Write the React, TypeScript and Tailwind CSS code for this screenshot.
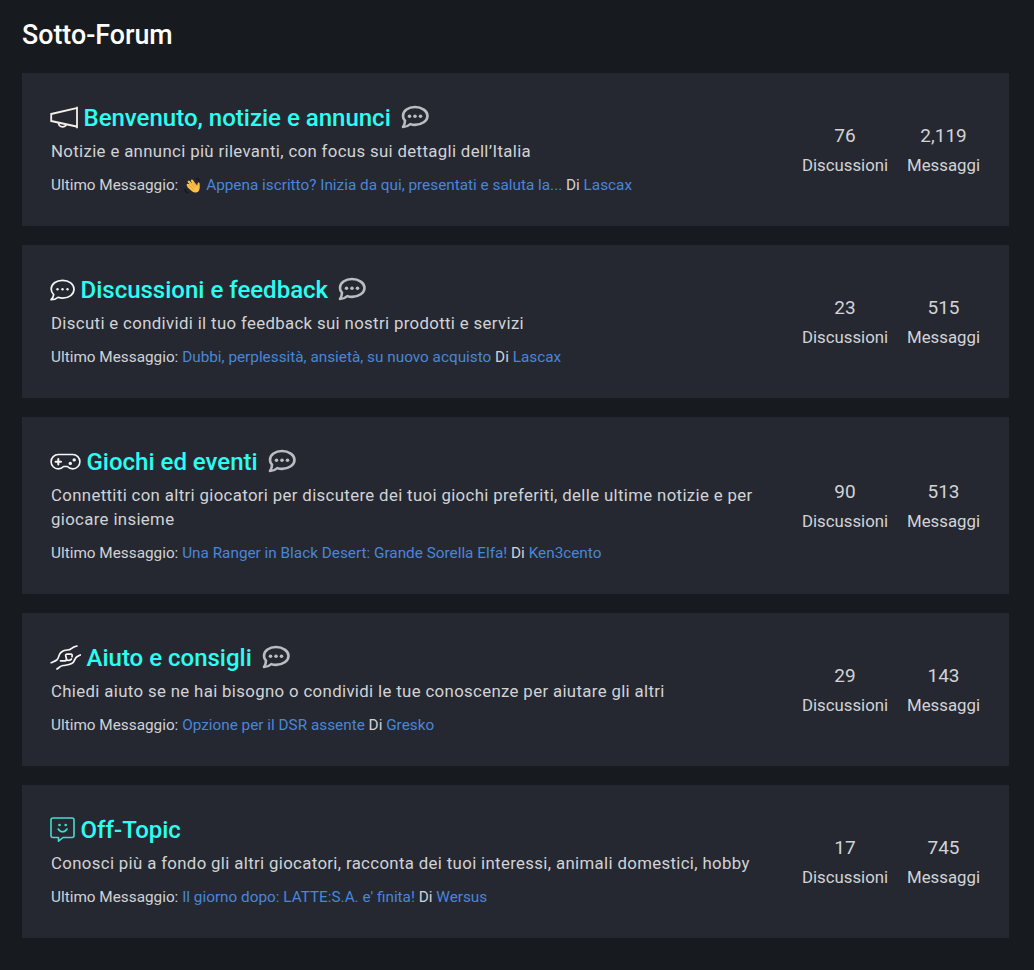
import type { ReactNode } from "react";

type Forum = {
  title: string;
  description: string;
  icon: ReactNode;
  bubble?: boolean;
  wave?: boolean;
  lastPost: string;
  author: string;
  topics: string;
  messages: string;
  heightClass: string;
}

function MegaphoneIcon() {
  return (
    <svg className="mr-[6px] -ml-px mb-[2px] h-[24px] w-[28px] shrink-0" viewBox="0 0 28 24" fill="none" stroke="#f4f0e6" strokeWidth="1.8">
      <path d="M1.200 8v9M1.200 9 26.500 3.200M1.200 16l25.300 5.500M27 1.800v21.400" />
      <path d="M8.500 17.800c.2 2.400 1.800 4 4 4 1.900 0 3.400-1 4-2.800" />
    </svg>
  )
}

function ChatIcon() {
  return (
    <svg className="mr-[6px] -ml-px h-[24px] w-[25px] shrink-0" viewBox="0 0 25 24" fill="none" stroke="#f6f6f6" strokeWidth="1.7" strokeLinejoin="round">
      <path d="M3.700 16.700C2.100 15 1.200 13.200 1.200 11.100 1.200 5.900 6.200 2.300 12.600 2.300s11.400 3.700 11.400 8.900-5 8.900-11.400 8.900c-1.700 0-3.200-.3-4.600-.8-1.800 1.500-4.200 2.400-6.900 2.400 1.500-1.500 2.400-3.200 2.600-5Z" />
      <g fill="#f6f6f6" stroke="none">
        <circle cx="7.500" cy="11.200" r="1.200" />
        <circle cx="12.500" cy="11.200" r="1.200" />
        <circle cx="17.500" cy="11.200" r="1.200" />
      </g>
    </svg>
  )
}

function GamepadIcon() {
  return (
    <svg className="mr-[6px] -ml-px h-[24px] w-[31px] shrink-0" viewBox="0 0 31 24" fill="none" stroke="#f6f6f6" strokeWidth="1.600" strokeLinecap="round" strokeLinejoin="round">
      <path d="M8.300 4.500h14.400a7.200 7.200 0 0 1 0 14.400c-2.200 0-4-.9-5.300-2.400h-3.800c-1.300 1.500-3.100 2.400-5.300 2.400a7.200 7.200 0 0 1 0-14.400Z" />
      <path d="M8.300 9v5.400M5.600 11.700H11" strokeWidth="2" />
      <g fill="#f6f6f6" stroke="none">
        <circle cx="24.200" cy="9.900" r="1.700" />
        <circle cx="20.300" cy="13.400" r="1.700" />
      </g>
    </svg>
  )
}

function HandsIcon() {
  return (
    <svg className="mr-[6px] -ml-px h-[26px] w-[31px] shrink-0" viewBox="0 0 31 26" fill="none" stroke="#f6f6f6" strokeWidth="1.700" strokeLinecap="round" strokeLinejoin="round">
      <path d="M27 1c-2.500.6-4.200 1.300-5.300 2.300-1.500 1.400-2.500 1.700-4.500 1.700-3.200 0-4.700.7-6.700 2.900C8.300 10.300 9 13.500 6.800 15c-1.500 1-3.400 1.700-5.600 2.700" />
      <path d="M7 24c2-1.300 3.600-3.200 6-3.500 3.600-.5 5.800-.3 8.700-1.900 2.800-1.600 2.700-4 4-5.700 1.100-1.300 2.800-2 4.600-3" />
      <path d="M10.500 15.800h4.700c1.200 0 1.500-.8 1.300-1.800l-.8-3.200c-.3-1.200.3-1.700 1.500-1.700h3.500c1.600 0 1.700 1.300 1.300 2.700" />
      <path d="M16.400 14.500c1.200 1.400 4 1.300 5-.5" />
    </svg>
  )
}

function SmileIcon() {
  return (
    <svg className="mr-[6px] -ml-px mb-px h-[26px] w-[25px] shrink-0" viewBox="0 0 25 26" fill="none" stroke="#45dcd0" strokeWidth="1.600" strokeLinejoin="round" strokeLinecap="round">
      <path d="M3 2h19a2 2 0 0 1 2 2v15.500a2 2 0 0 1-2 2h-9l-4.500 3.700v-3.700H3a2 2 0 0 1-2-2V4a2 2 0 0 1 2-2Z" />
      <path d="M8.200 13c1.100 1.900 2.500 2.700 4.400 2.700s3.300-.8 4.400-2.700" />
      <g fill="#45dcd0" stroke="none">
        <circle cx="9.500" cy="9" r="1.300" />
        <circle cx="15.700" cy="9" r="1.300" />
      </g>
    </svg>
  )
}

function BubbleIcon() {
  return (
    <svg className="mb-px ml-[10px] h-[25px] w-[28px] shrink-0" viewBox="0 0 28 25" fill="none" stroke="#bcbdc2" strokeWidth="2.600" strokeLinejoin="round">
      <path d="M4 15.700C2.700 14.300 2 12.700 2 10.900 2 5.900 7.300 2 14 2s12.500 3.900 12.500 8.900-5.800 9-12.500 9c-1.700 0-3.300-.3-4.700-.8-1.900 1.700-4.500 2.900-7.300 2.900 1.200-1.800 2-3.900 2-6.300Z" />
      <g fill="#bcbdc2" stroke="none">
        <circle cx="8.500" cy="11.300" r="1.800" />
        <circle cx="14" cy="11.300" r="1.800" />
        <circle cx="19.500" cy="11.300" r="1.800" />
      </g>
    </svg>
  )
}

function WaveIcon() {
  return (
    <svg className="mr-[5px] ml-[2px] inline-block h-[17px] w-[17px] align-[-4px]" viewBox="0 0 16 16" fill="none" strokeLinecap="round">
      <path d="M3.500 7.500 9 12M4.500 4.500l6 6M7.500 3.500l4.500 6" stroke="#fdc04a" strokeWidth="2.200" />
      <path d="M3 9.500 7.500 13.500c2.500 2 5.500 1.300 6.600-.8 1-2 .7-4.200.6-6.200 0-1.600-1.800-1.700-2 0l-.3 1.500L8.500 5 4 7Z" fill="#fdc04a" />
      <path d="m5 8 4 3.500M6.500 6l4 4M9 5.500l2.700 3" stroke="#e08a1e" strokeWidth=".6" />
      <path d="M.8 11.500c.2 1.700 1.300 2.900 3 3.200M11.500 1.200c1.400.2 2.300 1 2.700 2.300" stroke="#111318" strokeWidth="1" />
    </svg>
  )
}

const forums: Forum[] = [
  {
    title: "Benvenuto, notizie e annunci",
    description: "Notizie e annunci più rilevanti, con focus sui dettagli dell’Italia",
    icon: <MegaphoneIcon />,
    bubble: true,
    wave: true,
    lastPost: "Appena iscritto? Inizia da qui, presentati e saluta la...",
    author: "Lascax",
    topics: "76",
    messages: "2,119",
    heightClass: "h-[153.6px]",
  },
  {
    title: "Discussioni e feedback",
    description: "Discuti e condividi il tuo feedback sui nostri prodotti e servizi",
    icon: <ChatIcon />,
    bubble: true,
    lastPost: "Dubbi, perplessità, ansietà, su nuovo acquisto",
    author: "Lascax",
    topics: "23",
    messages: "515",
    heightClass: "h-[153.6px]",
  },
  {
    title: "Giochi ed eventi",
    description: "Connettiti con altri giocatori per discutere dei tuoi giochi preferiti, delle ultime notizie e per giocare insieme",
    icon: <GamepadIcon />,
    bubble: true,
    lastPost: "Una Ranger in Black Desert: Grande Sorella Elfa!",
    author: "Ken3cento",
    topics: "90",
    messages: "513",
    heightClass: "h-[177.6px]",
  },
  {
    title: "Aiuto e consigli",
    description: "Chiedi aiuto se ne hai bisogno o condividi le tue conoscenze per aiutare gli altri",
    icon: <HandsIcon />,
    bubble: true,
    lastPost: "Opzione per il DSR assente",
    author: "Gresko",
    topics: "29",
    messages: "143",
    heightClass: "h-[153.6px]",
  },
  {
    title: "Off-Topic",
    description: "Conosci più a fondo gli altri giocatori, racconta dei tuoi interessi, animali domestici, hobby",
    icon: <SmileIcon />,
    lastPost: "Il giorno dopo: LATTE:S.A. e' finita!",
    author: "Wersus",
    topics: "17",
    messages: "745",
    heightClass: "h-[153.6px]",
  },
]

function Stat({ value, label }: { value: string; label: string }) {
  return (
    <div className="flex flex-col items-center">
      <span className="text-[19px] leading-[30px]">{value}</span>
      <span className="text-[16.8px] leading-[29px]">{label}</span>
    </div>
  )
}

function ForumCard({ forum }: { forum: Forum }) {
  return (
    <li className={`flex items-center justify-between bg-[#252831] pr-[29px] pl-[29px] ${forum.heightClass}`}>
      <div className="w-[722px]">
        <h3 className="flex h-[32px] items-center text-[24px] leading-[32px] font-medium text-[#2cfdf2]">
          {forum.icon}
          <span className="-ml-[0.5px] whitespace-nowrap">{forum.title}</span>
          {forum.bubble && <BubbleIcon />}
        </h3>
        <p className="mt-[5px] text-[16.8px] leading-[24px] tracking-[0.35px]">{forum.description}</p>
        <p className="mt-[10px] h-[24px] text-[15.32px] leading-[24px] whitespace-nowrap">
          Ultimo Messaggio:{" "}
          {forum.wave && <WaveIcon />}
          <a className="text-[#4a86d8]">{forum.lastPost}</a> Di <a className="text-[#4a86d8]">{forum.author}</a>
        </p>
      </div>
      <div className="flex shrink-0 gap-[19px] pt-[3px]">
        <Stat value={forum.topics} label="Discussioni" />
        <Stat value={forum.messages} label="Messaggi" />
      </div>
    </li>
  )
}

export default function App() {
  return (
    <main className="h-[970px] bg-[#171a1e] pt-[19px] pr-[25px] pl-[22px] font-['Roboto',sans-serif] text-[#d2d3d6]">
      <h2 className="h-[53.7px] text-[26.8px] leading-[32px] font-medium text-white">Sotto-Forum</h2>
      <ul className="flex flex-col gap-[18.4px]">
        {forums.map((forum) => (
          <ForumCard key={forum.title} forum={forum} />
        ))}
      </ul>
    </main>
  )
}
